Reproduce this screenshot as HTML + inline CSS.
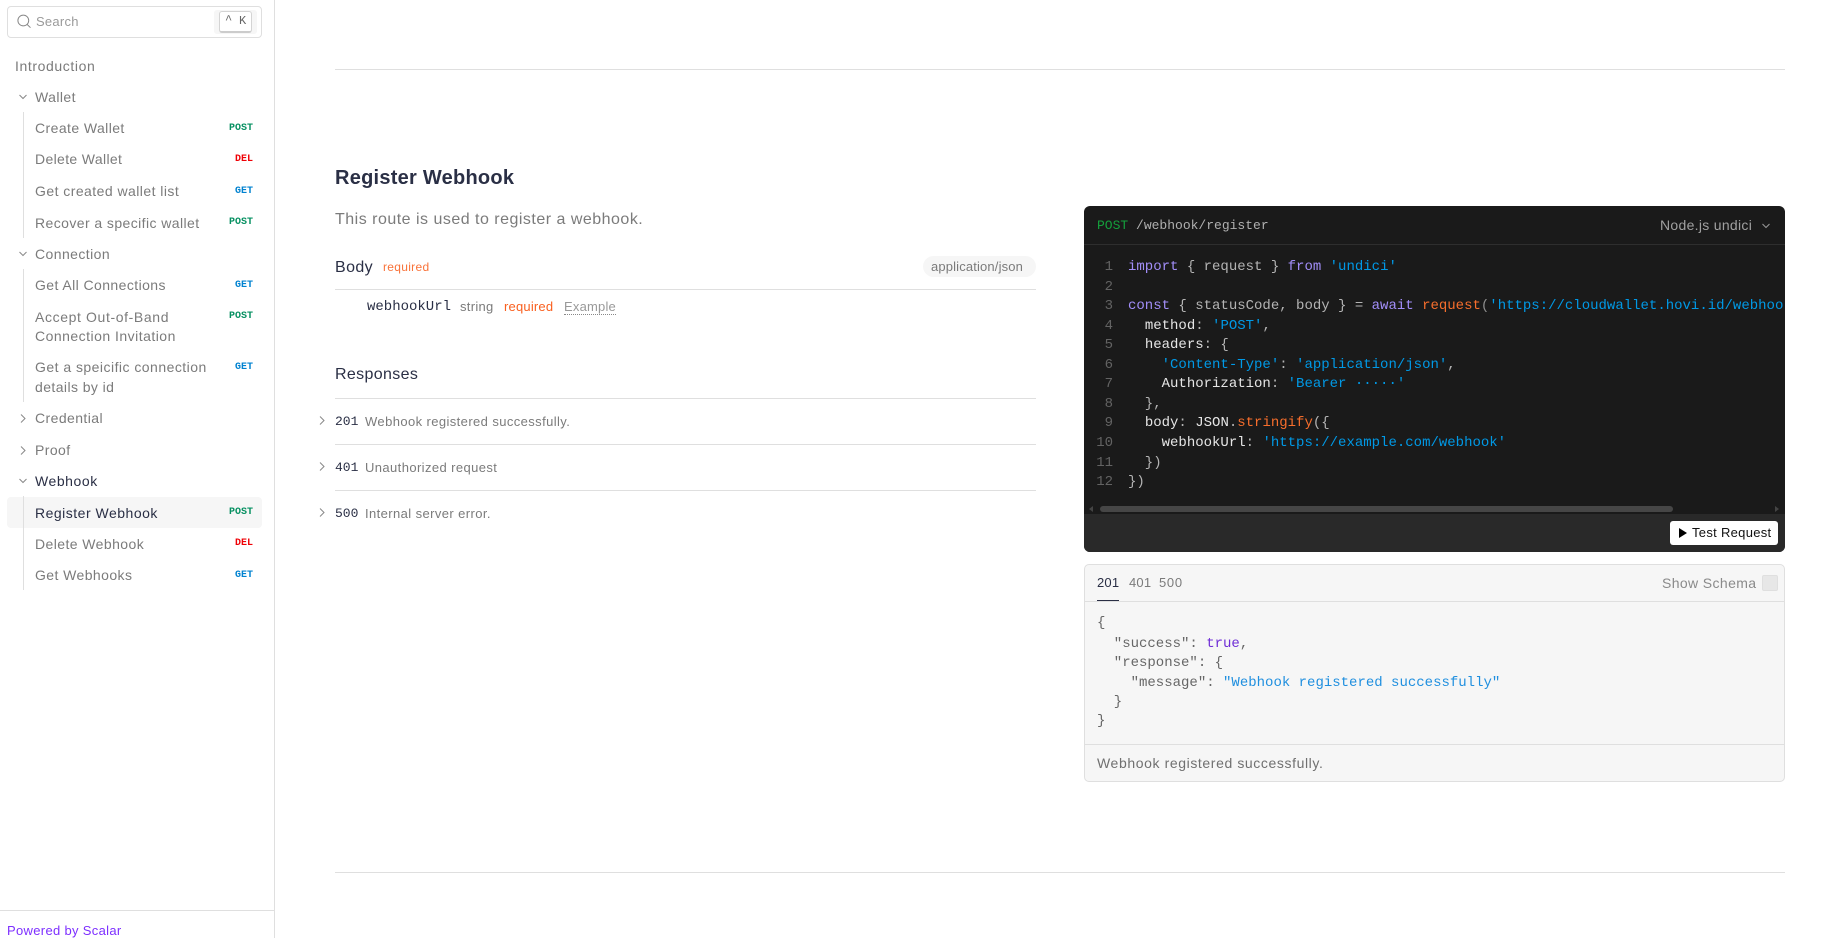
<!DOCTYPE html>
<html lang="en">
<head>
<meta charset="utf-8">
<title>Register Webhook</title>
<style>
html,body{margin:0;padding:0;background:#fff;width:1836px;height:938px;overflow:hidden}
body{font-family:"Liberation Sans",Arial,sans-serif;font-size:14px;color:#7b7b7b;position:relative}
.t{position:absolute;white-space:nowrap;line-height:20px;height:20px}
.m{font-family:"Liberation Mono","DejaVu Sans Mono",monospace}
.a{position:absolute}
.h{position:absolute;height:1px;background:#dfdfdf}
.v{position:absolute;width:1px;background:#dfdfdf}
.n{letter-spacing:.42px;left:35px}
.b{position:absolute;width:40px;left:213px;text-align:right;font-family:"Liberation Mono",monospace;font-weight:bold;font-size:10px;line-height:14px;height:14px}
.post{color:#069061}.del{color:#ef0006}.get{color:#0082d0}
svg{position:absolute;overflow:visible}
.code{position:absolute;left:1084px;top:206px;width:701px;height:346px;background:#1a1a1a;border-radius:6px;overflow:hidden}
.l{position:absolute;left:44px;white-space:pre;font-family:"Liberation Mono",monospace;font-size:14px;line-height:20px;height:20px;color:#b4b4b4}
.ln{position:absolute;left:0;width:29px;text-align:right;font-family:"Liberation Mono",monospace;font-size:14px;line-height:20px;color:#636363}
.k{color:#a28ef9}.s{color:#0099e6}.f{color:#f76e2c}.w{color:#e6e6e6}.p{color:#8f8f8f}
.j{position:absolute;left:1097px;white-space:pre;font-family:"Liberation Mono",monospace;font-size:14px;line-height:20px;height:20px;color:#666}
.tr{color:#6f2dd6}.st{color:#1f8fdf}
</style>
</head>
<body>
<!-- sidebar -->
<div class="v" style="left:274px;top:0;height:938px"></div>
<div class="a" style="left:7px;top:6px;width:253px;height:30px;border:1px solid #dfdfdf;border-radius:4px"></div>
<svg style="left:16px;top:14px" width="16" height="16" viewBox="0 0 16 16" fill="none" stroke="#888" stroke-width="1"><circle cx="7.300" cy="6.500" r="5.400"/><path d="M11.200 10.500l3.300 3.200"/></svg>
<div class="t" style="left:36px;top:12px;font-size:13px;color:#9a9a9a;letter-spacing:.25px">Search</div>
<div class="a" style="left:214px;top:10px;width:43px;height:24px;background:#f6f6f6;border-radius:3px"></div>
<div class="a" style="left:219px;top:11px;width:31px;height:19px;background:#fff;border:1px solid #d4d4d4;border-bottom:2px solid #ccc;border-radius:3px"></div>
<div class="t m" style="left:225px;top:10px;font-size:12px;color:#666">^</div>
<div class="t m" style="left:239px;top:11px;font-size:12px;color:#666">K</div>

<div class="t" style="left:15px;top:56px;letter-spacing:.6px">Introduction</div>
<svg style="left:19px;top:94px" width="8" height="6" fill="none" stroke="#888" stroke-width="1"><path d="M.5 1l3.5 3.5L7.500 1"/></svg>
<div class="t n" style="top:87px">Wallet</div>
<div class="v" style="left:23px;top:112px;height:126px"></div>
<div class="t n" style="top:118px">Create Wallet</div><div class="b post" style="top:122px">POST</div>
<div class="t n" style="top:149px;letter-spacing:.35px">Delete Wallet</div><div class="b del" style="top:153px">DEL</div>
<div class="t n" style="top:181px;letter-spacing:.45px">Get created wallet list</div><div class="b get" style="top:185px">GET</div>
<div class="t n" style="top:213px">Recover a specific wallet</div><div class="b post" style="top:216px">POST</div>
<svg style="left:19px;top:251px" width="8" height="6" fill="none" stroke="#888" stroke-width="1"><path d="M.5 1l3.500 3.500L7.500 1"/></svg>
<div class="t n" style="top:244px">Connection</div>
<div class="v" style="left:23px;top:269px;height:133px"></div>
<div class="t n" style="top:275px">Get All Connections</div><div class="b get" style="top:279px">GET</div>
<div class="t n" style="top:307px;letter-spacing:.62px">Accept Out-of-Band</div><div class="b post" style="top:310px">POST</div>
<div class="t n" style="top:326px;letter-spacing:.48px">Connection Invitation</div>
<div class="t n" style="top:357px;letter-spacing:.47px">Get a speicific connection</div><div class="b get" style="top:361px">GET</div>
<div class="t n" style="top:377px">details by id</div>
<svg style="left:20px;top:414px" width="6" height="9" fill="none" stroke="#888" stroke-width="1"><path d="M1 .5L5 4.500 1 8.500"/></svg>
<div class="t n" style="top:408px">Credential</div>
<svg style="left:20px;top:446px" width="6" height="9" fill="none" stroke="#888" stroke-width="1"><path d="M1 .5L5 4.500 1 8.500"/></svg>
<div class="t n" style="top:440px">Proof</div>
<svg style="left:19px;top:478px" width="8" height="6" fill="none" stroke="#888" stroke-width="1"><path d="M.5 1l3.500 3.500L7.500 1"/></svg>
<div class="t n" style="top:471px;color:#2a2f45;letter-spacing:.55px">Webhook</div>
<div class="a" style="left:7px;top:497px;width:255px;height:31px;background:#f6f6f6;border-radius:4px"></div>
<div class="v" style="left:23px;top:496px;height:94px"></div>
<div class="t n" style="top:503px;color:#2a2f45;letter-spacing:.5px">Register Webhook</div><div class="b post" style="top:506px">POST</div>
<div class="t n" style="top:534px">Delete Webhook</div><div class="b del" style="top:537px">DEL</div>
<div class="t n" style="top:565px">Get Webhooks</div><div class="b get" style="top:569px">GET</div>
<div class="h" style="left:0;top:910px;width:274px"></div>
<div class="t" style="left:7px;top:921px;color:#7d2fff;font-size:13px;letter-spacing:.32px">Powered by Scalar</div>

<!-- main -->
<div class="h" style="left:335px;top:69px;width:1450px"></div>
<div class="t" style="left:335px;top:168px;font-size:20px;font-weight:bold;color:#2a2f45;letter-spacing:.25px">Register Webhook</div>
<div class="t" style="left:335px;top:210px;font-size:16px;color:#7b7b7b;letter-spacing:.49px">This route is used to register a webhook.</div>
<div class="t" style="left:335px;top:258px;font-size:16px;color:#2a2f45;letter-spacing:.4px">Body</div>
<div class="t" style="left:383px;top:257px;font-size:12px;color:#f9733a;letter-spacing:.3px">required</div>
<div class="a" style="left:923px;top:256px;width:113px;height:21px;background:#f6f6f6;border-radius:11px"></div>
<div class="t" style="left:931px;top:257px;font-size:13px;color:#7b7b7b;letter-spacing:.15px">application/json</div>
<div class="h" style="left:335px;top:289px;width:701px"></div>
<div class="t m" style="left:367px;top:297px;font-size:14px;color:#2a2f45">webhookUrl</div>
<div class="t" style="left:460px;top:297px;font-size:13px;color:#7b7b7b;letter-spacing:.3px">string</div>
<div class="t" style="left:504px;top:297px;font-size:13px;color:#f95f1e;letter-spacing:.2px">required</div>
<div class="t" style="left:564px;top:297px;font-size:13px;color:#999;letter-spacing:.2px">Example</div>
<div class="a" style="left:564px;top:314px;width:52px;border-top:1px dotted #888"></div>
<div class="t" style="left:335px;top:365px;font-size:16px;color:#2a2f45;letter-spacing:.35px">Responses</div>

<div class="h" style="left:335px;top:398px;width:701px"></div>
<svg style="left:319px;top:416px" width="6" height="9" fill="none" stroke="#888" stroke-width="1"><path d="M1 .5L5 4.500 1 8.500"/></svg>
<div class="t m" style="left:335px;top:412px;font-size:13px;color:#2a2f45">201</div>
<div class="t" style="left:365px;top:412px;font-size:13px;letter-spacing:.4px">Webhook registered successfully.</div>
<div class="h" style="left:335px;top:444px;width:701px"></div>
<svg style="left:319px;top:462px" width="6" height="9" fill="none" stroke="#888" stroke-width="1"><path d="M1 .5L5 4.500 1 8.500"/></svg>
<div class="t m" style="left:335px;top:458px;font-size:13px;color:#2a2f45">401</div>
<div class="t" style="left:365px;top:458px;font-size:13px;letter-spacing:.4px">Unauthorized request</div>
<div class="h" style="left:335px;top:490px;width:701px"></div>
<svg style="left:319px;top:508px" width="6" height="9" fill="none" stroke="#888" stroke-width="1"><path d="M1 .5L5 4.500 1 8.500"/></svg>
<div class="t m" style="left:335px;top:504px;font-size:13px;color:#2a2f45">500</div>
<div class="t" style="left:365px;top:504px;font-size:13px;letter-spacing:.4px">Internal server error.</div>

<!-- code card -->
<div class="code">
  <div class="t m" style="left:13px;top:10px;font-size:13px;color:#b0b0b0"><span style="color:#14a03c">POST</span> /webhook/register</div>
  <div class="t" style="left:576px;top:9px;font-size:14px;color:#a0a0a0;letter-spacing:.3px">Node.js undici</div>
  <svg style="left:678px;top:17px" width="8" height="6" fill="none" stroke="#999" stroke-width="1"><path d="M.5 1l3.500 3.500L7.500 1"/></svg>
  <div class="h" style="left:0;top:38px;width:701px;background:#2e2e2e"></div>
  <div class="ln" style="top:51px">1</div><div class="l" style="top:51px"><span class="k">import</span> { request } <span class="k">from</span> <span class="s">'undici'</span></div>
  <div class="ln" style="top:71px">2</div>
  <div class="ln" style="top:90px">3</div><div class="l" style="top:90px"><span class="k">const</span> { statusCode, body } = <span class="k">await</span> <span class="f">request</span><span class="p">(</span><span class="s">'https://cloudwallet.hovi.id/webhook/register'</span>, {</div>
  <div class="ln" style="top:110px">4</div><div class="l" style="top:110px">  <span class="w">method</span>: <span class="s">'POST'</span>,</div>
  <div class="ln" style="top:129px">5</div><div class="l" style="top:129px">  <span class="w">headers</span>: {</div>
  <div class="ln" style="top:149px">6</div><div class="l" style="top:149px">    <span class="s">'Content-Type'</span>: <span class="s">'application/json'</span>,</div>
  <div class="ln" style="top:168px">7</div><div class="l" style="top:168px">    <span class="w">Authorization</span>: <span class="s">'Bearer ·····'</span></div>
  <div class="ln" style="top:188px">8</div><div class="l" style="top:188px">  },</div>
  <div class="ln" style="top:207px">9</div><div class="l" style="top:207px">  <span class="w">body</span>: <span class="w">JSON</span>.<span class="f">stringify</span>({</div>
  <div class="ln" style="top:227px">10</div><div class="l" style="top:227px">    <span class="w">webhookUrl</span>: <span class="s">'https://example.com/webhook'</span></div>
  <div class="ln" style="top:247px">11</div><div class="l" style="top:247px">  })</div>
  <div class="ln" style="top:266px">12</div><div class="l" style="top:266px">})</div>
  <div class="a" style="left:16px;top:300px;width:573px;height:6px;background:#464646;border-radius:3px"></div>
  <div class="a" style="left:5px;top:300px;border:3px solid transparent;border-right:4px solid #444;border-left:0"></div>
  <div class="a" style="left:691px;top:300px;border:3px solid transparent;border-left:4px solid #444;border-right:0"></div>
  <div class="a" style="left:0;top:308px;width:701px;height:38px;background:#292929"></div>
  <div class="a" style="left:586px;top:315px;width:108px;height:24px;background:#fff;border-radius:3px"></div>
  <div class="a" style="left:595px;top:322px;border:5px solid transparent;border-left:8px solid #000;border-right:0"></div>
  <div class="t" style="left:608px;top:317px;font-size:13px;color:#111;letter-spacing:.3px">Test Request</div>
</div>

<!-- response card -->
<div class="a" style="left:1084px;top:564px;width:699px;height:216px;background:#f6f6f6;border:1px solid #dfdfdf;border-radius:5px"></div>
<div class="h" style="left:1085px;top:601px;width:699px"></div>
<div class="t" style="left:1097px;top:573px;font-size:13px;color:#2a2f45;letter-spacing:.2px">201</div>
<div class="a" style="left:1097px;top:600px;width:22px;height:1px;background:#2a2f45"></div>
<div class="t" style="left:1129px;top:573px;font-size:13px;letter-spacing:.2px">401</div>
<div class="t" style="left:1159px;top:573px;font-size:13px;letter-spacing:.7px">500</div>
<div class="t" style="left:1662px;top:573px;font-size:14px;color:#8a8a8a;letter-spacing:.38px">Show Schema</div>
<div class="a" style="left:1762px;top:575px;width:14px;height:14px;background:#e7e7e7;border:1px solid #dfdfdf;border-radius:2px"></div>
<div class="j" style="top:613px">{</div>
<div class="j" style="top:634px">  "success": <span class="tr">true</span>,</div>
<div class="j" style="top:653px">  "response": {</div>
<div class="j" style="top:673px">    "message": <span class="st">"Webhook registered successfully"</span></div>
<div class="j" style="top:692px">  }</div>
<div class="j" style="top:711px">}</div>
<div class="h" style="left:1085px;top:744px;width:699px"></div>
<div class="t" style="left:1097px;top:753px;font-size:14px;color:#707070;letter-spacing:.6px">Webhook registered successfully.</div>
<div class="h" style="left:335px;top:872px;width:1450px"></div>
</body>
</html>
